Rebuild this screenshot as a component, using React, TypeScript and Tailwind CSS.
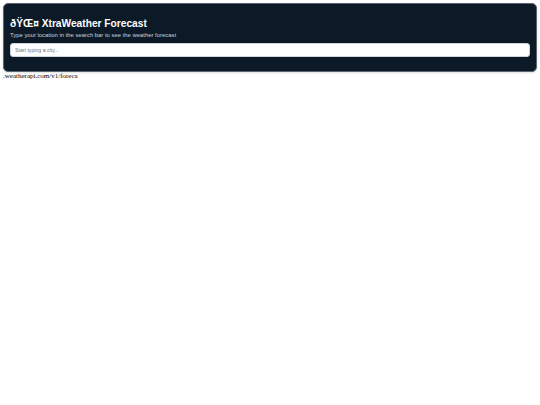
import React from 'react';

export default function App() {
  return (
    <div className="min-h-[405px] bg-white" style={{ fontFamily: '"Liberation Sans", Arial, sans-serif' }}>
      <div className="px-[3px] pt-[3px]">
        <div className="bg-[#0c1a28] border border-[#5b6470] rounded-[5px] px-[6px] pt-[13px] pb-[14px] shadow-sm">
          <h1 className="text-white font-bold text-[10.2px] leading-[13px]">ðŸŒ¤ XtraWeather Forecast</h1>
          <p className="text-[#c9d1da] text-[5.9px] leading-[8px] mt-[1px]">
            Type your location in the search bar to see the weather forecast
          </p>
          <input
            type="text"
            placeholder="Start typing a city..."
            className="mt-[4px] block w-full h-[14px] rounded-[3px] bg-white px-[4px] text-[5.2px] text-gray-700 placeholder:text-[#6b7280] outline-none border border-[#d1d5db]"
          />
        </div>
      </div>
      <p className="px-[3px] text-[7px] leading-[8px] text-black" style={{ fontFamily: '"Liberation Serif", "Times New Roman", serif' }}>
        .weatherapi.com/v1/foreca
      </p>
    </div>
  );
}
